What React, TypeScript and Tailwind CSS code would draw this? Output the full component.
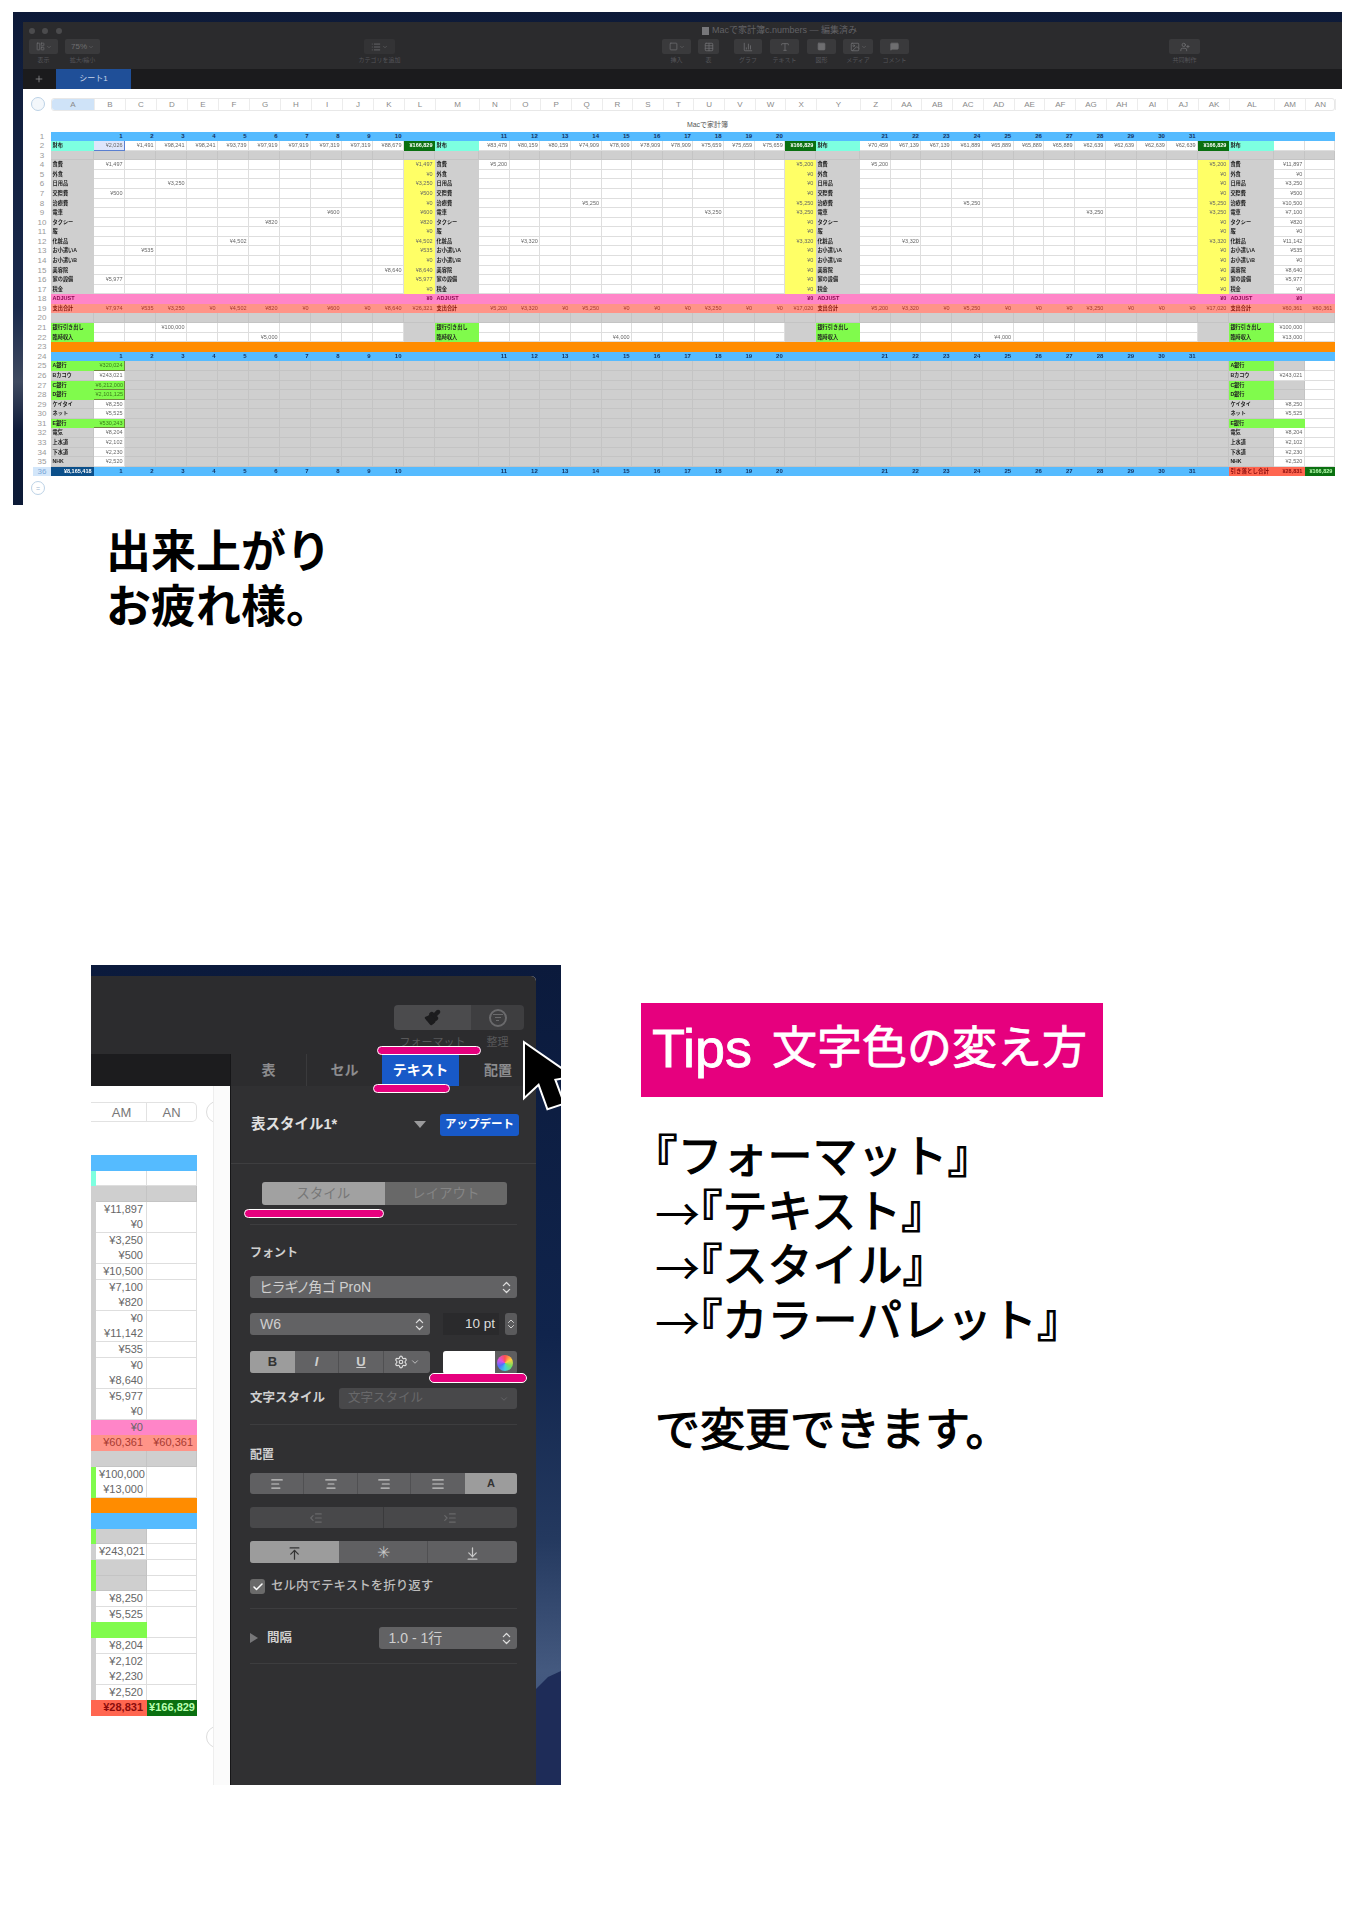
import type { ReactNode } from "react";
import {
  AlignCenter,
  AlignJustify,
  AlignLeft,
  AlignRight,
  ArrowDownToLine,
  ArrowUpToLine,
  BarChart3,
  Check,
  ChevronDown,
  ChevronsUpDown,
  Image,
  Indent,
  LayoutPanelLeft,
  List,
  MessageSquare,
  Outdent,
  Paintbrush,
  Plus,
  Settings,
  Square,
  Table,
  Type,
  UserPlus,
} from "lucide-react";

const COLS = [
  "A", "B", "C", "D", "E", "F", "G", "H", "I", "J", "K", "L", "M", "N", "O", "P", "Q", "R", "S", "T",
  "U", "V", "W", "X", "Y", "Z", "AA", "AB", "AC", "AD", "AE", "AF", "AG", "AH", "AI", "AJ", "AK", "AL", "AM", "AN",
];
const DAYS = [...COLS.slice(1, 11), ...COLS.slice(13, 23), ...COLS.slice(25, 36)];
const LABEL_COLS = ["A", "M", "Y", "AL"];
const TOTAL_COLS = ["L", "X", "AK"];
const ITEMS = ["食費", "外食", "日用品", "交際費", "治療費", "電車", "タクシー", "服", "化粧品", "お小遣いA", "お小遣いB", "美容院", "家の設備", "税金"];
const ACCOUNTS = ["A銀行", "Bカコウ", "C銀行", "D銀行", "ケイタイ", "ネット", "E銀行", "電気", "上水道", "下水道", "NHK"];
const BANK_ROWS = [25, 27, 28, 31];

function zip(cols: string[], vals: string[]) {
  return Object.fromEntries(cols.map((c, i) => [c, vals[i]]));
}

function itemRow(r: number): Record<string, string> {
  const i = r - 4;
  const l = ["¥1,497", "¥0", "¥3,250", "¥500", "¥0", "¥600", "¥820", "¥0", "¥4,502", "¥535", "¥0", "¥8,640", "¥5,977", "¥0"];
  const x = ["¥5,200", "¥0", "¥0", "¥0", "¥5,250", "¥3,250", "¥0", "¥0", "¥3,320", "¥0", "¥0", "¥0", "¥0", "¥0"];
  const am = ["¥11,897", "¥0", "¥3,250", "¥500", "¥10,500", "¥7,100", "¥820", "¥0", "¥11,142", "¥535", "¥0", "¥8,640", "¥5,977", "¥0"];
  return { A: ITEMS[i], M: ITEMS[i], Y: ITEMS[i], AL: ITEMS[i], L: l[i], X: x[i], AK: x[i], AM: am[i] };
}

const EXTRA: Record<number, Record<string, string>> = {
  4: { B: "¥1,497", N: "¥5,200", Z: "¥5,200" },
  6: { D: "¥3,250" },
  7: { B: "¥500" },
  8: { Q: "¥5,250", AC: "¥5,250" },
  9: { I: "¥600", U: "¥3,250", AG: "¥3,250" },
  10: { G: "¥820" },
  12: { F: "¥4,502", O: "¥3,320", AA: "¥3,320" },
  13: { C: "¥535" },
  15: { K: "¥8,640" },
  16: { B: "¥5,977" },
};

const PURSE = [
  "¥2,026", "¥1,491", "¥98,241", "¥98,241", "¥93,739", "¥97,919", "¥97,919", "¥97,319", "¥97,319", "¥88,679",
  "¥83,479", "¥80,159", "¥80,159", "¥74,909", "¥78,909", "¥78,909", "¥78,909", "¥75,659", "¥75,659", "¥75,659",
  "¥70,459", "¥67,139", "¥67,139", "¥61,889", "¥65,889", "¥65,889", "¥65,889", "¥62,639", "¥62,639", "¥62,639", "¥62,639",
];
const SPENT = [
  "¥7,974", "¥535", "¥3,250", "¥0", "¥4,502", "¥820", "¥0", "¥600", "¥0", "¥8,640",
  "¥5,200", "¥3,320", "¥0", "¥5,250", "¥0", "¥0", "¥0", "¥3,250", "¥0", "¥0",
  "¥5,200", "¥3,320", "¥0", "¥5,250", "¥0", "¥0", "¥0", "¥3,250", "¥0", "¥0", "¥0",
];
const NUMBERS = DAYS.map((_, i) => String(i + 1));
const ACCOUNT_B = ["¥320,024", "¥243,021", "¥6,212,000", "¥2,101,125", "¥8,250", "¥5,525", "¥530,243", "¥8,204", "¥2,102", "¥2,230", "¥2,520"];
const ACCOUNT_AM = ["", "¥243,021", "", "", "¥8,250", "¥5,525", "", "¥8,204", "¥2,102", "¥2,230", "¥2,520"];

function rowData(r: number): Record<string, string> {
  if (r === 1 || r === 24) return zip(DAYS, NUMBERS);
  if (r === 2) {
    return { ...zip(DAYS, PURSE), A: "財布", M: "財布", Y: "財布", AL: "財布", L: "¥166,829", X: "¥166,829", AK: "¥166,829" };
  }
  if (r >= 4 && r <= 17) return { ...itemRow(r), ...(EXTRA[r] ?? {}) };
  if (r === 18) return { A: "ADJUST", M: "ADJUST", Y: "ADJUST", AL: "ADJUST", L: "¥0", X: "¥0", AK: "¥0", AM: "¥0" };
  if (r === 19) {
    return {
      ...zip(DAYS, SPENT),
      A: "支出合計", M: "支出合計", Y: "支出合計", AL: "支出合計",
      L: "¥26,321", X: "¥17,020", AK: "¥17,020", AM: "¥60,361", AN: "¥60,361",
    };
  }
  if (r === 21) return { A: "銀行引き出し", M: "銀行引き出し", Y: "銀行引き出し", AL: "銀行引き出し", D: "¥100,000", AM: "¥100,000" };
  if (r === 22) return { A: "臨時収入", M: "臨時収入", Y: "臨時収入", AL: "臨時収入", G: "¥5,000", R: "¥4,000", AD: "¥4,000", AM: "¥13,000" };
  if (r >= 25 && r <= 35) {
    const i = r - 25;
    return { A: ACCOUNTS[i], AL: ACCOUNTS[i], B: ACCOUNT_B[i], AM: ACCOUNT_AM[i] };
  }
  if (r === 36) return { ...zip(DAYS, NUMBERS), A: "¥8,165,418", AL: "引き落とし合計", AM: "¥28,831", AN: "¥166,829" };
  return {};
}

function cellBg(r: number, col: string) {
  const label = LABEL_COLS.includes(col);
  const total = TOTAL_COLS.includes(col);
  if (r === 1 || r === 24) return "bg-[#55bbff] border-[#55bbff]";
  if (r === 36) {
    if (col === "A") return "bg-[#0b4f8a] border-[#0b4f8a]";
    if (col === "AL" || col === "AM") return "bg-[#ff6650] border-[#ff6650]";
    if (col === "AN") return "bg-[#0a7010] border-[#0a7010]";
    return "bg-[#55bbff] border-[#55bbff]";
  }
  if (r === 3 || r === 20) return "bg-[#cfcfcf] border-[#c4c4c4]";
  if (r === 23) return "bg-[#ff8c00] border-[#ff8c00]";
  if (r === 18) return "bg-[#ff85c8] border-[#ff85c8]";
  if (r === 19) return "bg-[#ff9488] border-[#ff9488]";
  if (r === 2) {
    if (col === "B") return "bg-[#dfe6fb] border-[#5a7fd0]";
    if (label) return "bg-[#7dffe0] border-[#7dffe0]";
    if (total) return "bg-[#0a7010] border-[#0a7010]";
    return "bg-white border-[#dedede]";
  }
  if (r === 21 || r === 22) {
    if (label) return "bg-[#80fb4c] border-[#80fb4c]";
    if (total) return "bg-[#cfcfcf] border-[#cfcfcf]";
    return "bg-white border-[#dedede]";
  }
  if (r >= 25) {
    const bank = BANK_ROWS.includes(r);
    if (col === "A" || col === "AL") return bank ? "bg-[#80fb4c] border-[#80fb4c]" : "bg-[#cfcfcf] border-[#c4c4c4]";
    if (col === "B") {
      if (bank) return "bg-[#80fb4c] border-[#6d8a3c]";
      return "bg-white border-[#dedede]";
    }
    if (col === "AM") {
      if (r === 31) return "bg-[#80fb4c] border-[#80fb4c]";
      return bank ? "bg-[#cfcfcf] border-[#c4c4c4]" : "bg-white border-[#dedede]";
    }
    if (col === "AN") return "bg-white border-[#dedede]";
    return "bg-[#cfcfcf] border-[#c4c4c4]";
  }
  if (label) return "bg-[#cfcfcf] border-[#cfcfcf]";
  if (total) return "bg-[#ffff66] border-[#ffff66]";
  return "bg-white border-[#dedede]";
}

function cellText(r: number, col: string) {
  if (r === 1 || r === 24 || (r === 36 && DAYS.includes(col))) return "text-[6px] text-[#12305e] font-bold";
  if (r === 36 && col === "A") return "text-white font-bold";
  if (r === 36 && col === "AN") return "text-[#b8ffb0] font-bold";
  if (r === 36) return "text-[#8a0c0c] font-bold";
  if (r === 18) return "text-[#8a0a50] font-bold";
  if (r === 2 && TOTAL_COLS.includes(col)) return "text-white font-bold";
  if (LABEL_COLS.includes(col)) return r === 19 ? "text-[5.2px] text-[#8a1a10] font-bold" : "text-[5.2px] text-[#222222] font-bold";
  if (r === 19) return "text-[#a83a30]";
  if (r >= 25 && col === "B" && BANK_ROWS.includes(r)) return "text-[#3a7a1a]";
  return "text-[#666666]";
}

const ROWS = Array.from({ length: 36 }, (_, i) => i + 1);

function Sheet() {
  return (
    <div className="grid auto-rows-[9.58px] w-[1284px] grid-cols-[43px_repeat(11,31px)_44px_repeat(11,30.64px)_44px_repeat(12,30.75px)_45px_31px_30px] text-[5.5px] leading-[9px] blur-[0.25px] [font-family:'Liberation_Sans','Noto_Sans_CJK_JP',sans-serif]">
      {ROWS.map((r) => {
        const data = rowData(r);
        return COLS.map((col) => (
          <div
            key={`${r}-${col}`}
            className={`overflow-hidden whitespace-nowrap border-r border-b px-[1.5px] ${cellBg(r, col)} ${cellText(r, col)} ${
              LABEL_COLS.includes(col) && !(r === 36 && col === "A") ? "text-left" : "text-right"
            }`}
          >
            {data[col]}
          </div>
        ));
      })}
    </div>
  );
}

function ToolBtn({ w, ml, label, children, dim }: { w: string; ml: string; label: string; children: ReactNode; dim?: boolean }) {
  return (
    <div className={`flex flex-col items-center ${w} ${ml}`}>
      <div className={`flex h-[15px] w-full items-center justify-center gap-px rounded-[2px] text-[#6e6e70] ${dim ? "bg-[#333335]" : "bg-[#3a3a3c]"}`}>
        {children}
      </div>
      <span className="mt-[2px] whitespace-nowrap text-[6px] leading-[9px] text-[#55555a]">{label}</span>
    </div>
  );
}

function MainWindow() {
  return (
    <section className="ml-[13px] mt-[12px] h-[493px] w-[1329px] bg-[linear-gradient(180deg,#0d1a38_0%,#1a2a4c_60%,#3f4a60_75%,#0f1c3a_85%,#0c1a36_100%)] pl-[10px] pt-[10px]">
      <div className="flex h-full flex-col bg-white">
        <div className="h-[47px] bg-[#2b2b2d]">
          <div className="flex h-[14px] items-center pl-[6px] pt-[3px]">
            <span className="h-[6px] w-[6px] rounded-full bg-[#4b4b4d]" />
            <span className="ml-[7px] h-[6px] w-[6px] rounded-full bg-[#4b4b4d]" />
            <span className="ml-[8px] h-[6px] w-[6px] rounded-full bg-[#4b4b4d]" />
            <span className="ml-[640px] h-[8px] w-[7px] bg-[#77777a]" />
            <span className="ml-[3px] text-[9px] text-[#626266]">Macで家計簿c.numbers — 編集済み</span>
          </div>
          <div className="mt-[3px] flex">
            <ToolBtn w="w-[29px]" ml="ml-[6px]" label="表示"><LayoutPanelLeft size={9} /><ChevronDown size={6} /></ToolBtn>
            <ToolBtn w="w-[35px]" ml="ml-[7px]" label="拡大/縮小"><span className="text-[8px]">75%</span><ChevronDown size={6} /></ToolBtn>
            <ToolBtn w="w-[31px]" ml="ml-[264px]" label="カテゴリを追加" dim><List size={10} /><ChevronDown size={6} /></ToolBtn>
            <ToolBtn w="w-[29px]" ml="ml-[267px]" label="挿入"><Square size={9} /><ChevronDown size={6} /></ToolBtn>
            <ToolBtn w="w-[21px]" ml="ml-[7px]" label="表"><Table size={10} /></ToolBtn>
            <ToolBtn w="w-[28px]" ml="ml-[15px]" label="グラフ"><BarChart3 size={10} /></ToolBtn>
            <ToolBtn w="w-[29px]" ml="ml-[8px]" label="テキスト"><Type size={10} /></ToolBtn>
            <ToolBtn w="w-[29px]" ml="ml-[8px]" label="図形"><Square size={9} fill="currentColor" /></ToolBtn>
            <ToolBtn w="w-[30px]" ml="ml-[7px]" label="メディア"><Image size={10} /><ChevronDown size={6} /></ToolBtn>
            <ToolBtn w="w-[29px]" ml="ml-[7px]" label="コメント"><MessageSquare size={9} fill="currentColor" /></ToolBtn>
            <ToolBtn w="w-[31px]" ml="ml-[260px]" label="共同制作"><UserPlus size={10} /></ToolBtn>
          </div>
        </div>
        <div className="flex h-[20px] bg-[#1b1b1d]">
          <Plus size={10} className="ml-[11px] self-center text-[#8a8a8c]" />
          <div className="ml-[12px] flex w-[75px] items-center justify-center bg-[#1f4f98] text-[8px] text-[#c9d6ea]">シート1</div>
        </div>
        <div className="pt-[9px]">
          <div className="flex h-[13px]">
            <span className="ml-[8px] mt-[-1px] h-[14px] w-[14px] rounded-full border border-[#bcd2e6] bg-[#f3f7fb]" />
            <div className="ml-[6px] grid w-[1284px] grid-cols-[43px_repeat(11,31px)_44px_repeat(11,30.64px)_44px_repeat(12,30.75px)_45px_31px_30px] rounded-[3px] border border-[#e8e8e8] text-center text-[8px] leading-[11px] text-[#8a8a8a]">
              {COLS.map((c) => (
                <span key={c} className={`border-r border-[#ececec] ${c === "A" ? "rounded-l-[3px] bg-[#cfe3f8]" : ""}`}>{c}</span>
              ))}
            </div>
          </div>
          <div className="h-[20.5px] pt-[9px] text-center text-[7px] leading-[9px] text-[#555555]">
            <span className="ml-[50px]">Macで家計簿</span>
          </div>
          <div className="flex">
            <div className="ml-[10px] w-[18px]">
              {ROWS.map((r) => (
                <div key={r} className={`h-[9.58px] text-center text-[8px] leading-[9.58px] ${r === 36 ? "bg-[#d2e6fa] text-[#7aa8d8]" : "text-[#999999]"}`}>{r}</div>
              ))}
            </div>
            <Sheet />
          </div>
          <span className="ml-[8px] mt-[5px] flex h-[14px] w-[14px] items-center justify-center rounded-full border border-[#bcd2e6] text-[7px] leading-none text-[#9ab5d0]">=</span>
        </div>
      </div>
    </section>
  );
}

function MiniTable() {
  return (
    <div className="mt-[33px] w-[106px] text-right text-[11px] text-[#666666] [font-family:'Liberation_Sans','Noto_Sans_CJK_JP',sans-serif]">
      {ROWS.map((r) => {
        const data = rowData(r);
        const bar = cellBg(r, "AL").split(" ")[0];
        return (
          <div key={r} className="grid h-[15.58px] grid-cols-[5px_51px_50px]">
            <div className={bar} />
            <div className={`border-b border-r px-[3px] leading-[15px] whitespace-nowrap ${cellBg(r, "AM")} ${r === 36 ? "text-[#8a0c0c] font-bold" : r === 19 ? "text-[#a83a30]" : ""}`}>
              {r === 1 || r === 24 ? "" : data.AM}
            </div>
            <div className={`overflow-hidden border-b border-r px-[1px] leading-[15px] whitespace-nowrap ${cellBg(r, "AN")} ${r === 36 ? "text-[#b8ffb0] font-bold" : r === 19 ? "pr-[3px] text-[#a83a30]" : ""}`}>
              {data.AN}
            </div>
          </div>
        );
      })}
    </div>
  );
}

function PanelSelect({ children, className }: { children: ReactNode; className: string }) {
  return (
    <div className={`flex h-[22px] items-center justify-between rounded-[3px] bg-[#626264] pl-[10px] pr-[3px] text-[14px] text-[#cfcfcf] [font-feature-settings:'palt'] ${className}`}>
      <span>{children}</span>
      <ChevronsUpDown size={15} className="text-[#dddddd]" />
    </div>
  );
}

function Divider({ className }: { className: string }) {
  return <div className={`h-px bg-[#3d3d3f] ${className}`} />;
}

function Inspector() {
  return (
    <aside className="h-full w-[306px] border-l border-[#161618] bg-[#303032] text-[#cfcfcf]">
      <div className="grid h-[32px] grid-cols-[76px_75px_77px_78px] bg-[#2c2c2e] text-center text-[14px] font-bold leading-[32px] text-[#8c8c8e]">
        <span className="border-r border-[#3a3a3c]">表</span>
        <span>セル</span>
        <span className="bg-[#1859c8] text-white">テキスト</span>
        <span>配置</span>
      </div>
      <div className="flex h-[78px] items-center border-b border-[#3e3e40] pl-[20px] pr-[17px]">
        <span className="text-[14.5px] font-bold text-[#e0e0e0]">表スタイル1*</span>
        <span className="ml-auto h-0 w-0 border-x-[6px] border-t-[7px] border-x-transparent border-t-[#9a9a9c]" />
        <span className="ml-[14px] flex h-[22px] w-[79px] items-center justify-center rounded-[3px] bg-[#1859c8] text-[11.5px] font-bold text-white">アップデート</span>
      </div>
      <div className="px-[19px]">
        <div className="ml-[12px] mt-[18px] grid h-[23px] w-[245px] grid-cols-2 overflow-hidden rounded-[3px] text-center text-[13.5px] leading-[23px]">
          <span className="bg-[#a1a1a1] text-[#777777]">スタイル</span>
          <span className="bg-[#686868] text-[#858585]">レイアウト</span>
        </div>
        <Divider className="mt-[19px]" />
        <p className="mt-[20px] h-[16px] text-[12px] font-bold leading-[16px]">フォント</p>
        <PanelSelect className="mt-[15px]">ヒラギノ角ゴ ProN</PanelSelect>
        <div className="mt-[15px] flex items-center">
          <PanelSelect className="w-[180px]">W6</PanelSelect>
          <span className="ml-[13px] flex h-[22px] w-[56px] items-center justify-end bg-[#2a2a2c] pr-[4px] text-[13.5px] text-[#dddddd]">10 pt</span>
          <span className="ml-[6px] flex h-[22px] w-[12px] items-center justify-center rounded-[3px] bg-[#5a5a5c]"><ChevronsUpDown size={12} /></span>
        </div>
        <div className="mt-[16px] flex h-[22px] items-center">
          <div className="grid h-full w-[180px] grid-cols-[45px_44px_45px_46px] overflow-hidden rounded-[3px] bg-[#626264] text-center text-[13px] font-bold leading-[22px]">
            <span className="bg-[#9c9c9c] text-[#333333]">B</span>
            <span className="border-r border-[#505052] italic">I</span>
            <span className="border-r border-[#505052] underline">U</span>
            <span className="flex items-center justify-center gap-[2px]"><Settings size={14} className="text-[#dddddd]" /><ChevronDown size={10} /></span>
          </div>
          <div className="ml-[13px] flex h-[23px] w-[74px] overflow-hidden rounded-[3px] bg-[#5e5e60]">
            <span className="w-[52px] bg-white" />
            <span className="ml-[2px] mt-[4px] h-[16px] w-[16px] rounded-full bg-[conic-gradient(#ff5050,#ffd040,#70e060,#40d0e0,#5070ff,#e050e0,#ff5050)]" />
          </div>
        </div>
        <div className="mt-[15px] flex h-[21px] items-center">
          <span className="w-[89px] text-[12.5px] font-bold">文字スタイル</span>
          <div className="flex h-full flex-1 items-center justify-between rounded-[3px] bg-[#48484a] pl-[9px] pr-[8px] text-[12.5px] text-[#68686a]">
            文字スタイル
            <ChevronDown size={10} />
          </div>
        </div>
        <Divider className="mt-[15px]" />
        <p className="mt-[22px] h-[16px] text-[12px] font-bold leading-[16px]">配置</p>
        <div className="mt-[10px] grid h-[21px] grid-cols-[54px_54px_53px_54px_1fr] overflow-hidden rounded-[3px] bg-[#606062] text-[#c8c8c8] *:flex *:items-center *:justify-center">
          <span className="border-r border-[#505052]"><AlignLeft size={14} /></span>
          <span className="border-r border-[#505052]"><AlignCenter size={14} /></span>
          <span className="border-r border-[#505052]"><AlignRight size={14} /></span>
          <span><AlignJustify size={14} /></span>
          <span className="bg-[#9c9c9c] text-[11px] font-bold text-[#333333]">A</span>
        </div>
        <div className="mt-[13px] grid h-[21px] grid-cols-2 overflow-hidden rounded-[3px] bg-[#48484a] text-[#68686a] *:flex *:items-center *:justify-center">
          <span className="border-r border-[#3a3a3c]"><Outdent size={14} /></span>
          <span><Indent size={14} /></span>
        </div>
        <div className="mt-[13px] grid h-[22px] grid-cols-[89px_89px_1fr] overflow-hidden rounded-[3px] bg-[#606062] text-[#c8c8c8] *:flex *:items-center *:justify-center">
          <span className="bg-[#9c9c9c] text-[#333333]"><ArrowUpToLine size={15} /></span>
          <span className="border-r border-[#505052] text-[16px]">✳</span>
          <span><ArrowDownToLine size={15} /></span>
        </div>
        <div className="mt-[16px] flex h-[15px] items-center">
          <span className="flex h-[15px] w-[15px] items-center justify-center rounded-[3px] bg-[#6a6a6a]"><Check size={12} strokeWidth={3} className="text-white" /></span>
          <span className="ml-[6px] text-[12.5px] font-medium text-[#bdbdbd]">セル内でテキストを折り返す</span>
        </div>
        <Divider className="mt-[14px]" />
        <div className="mt-[18px] flex h-[22px] items-center">
          <span className="h-0 w-0 border-y-[5px] border-l-[8px] border-y-transparent border-l-[#777779]" />
          <span className="ml-[9px] w-[112px] text-[12.5px] font-bold">間隔</span>
          <PanelSelect className="w-[139px]">1.0 - 1行</PanelSelect>
        </div>
        <Divider className="mt-[14px]" />
      </div>
    </aside>
  );
}

function FormatWindow() {
  return (
    <section className="relative ml-[91px] h-[820px] w-[470px] shrink-0 overflow-hidden bg-[linear-gradient(180deg,#0b1a3c_0%,#10244c_45%,#24395f_70%,#44597f_86%,#3c4f78_100%)] pt-[11px] [font-family:'Liberation_Sans','Noto_Sans_CJK_JP',sans-serif]">
      <svg className="absolute bottom-0 right-0 h-[114px] w-[25px]" viewBox="0 0 25 114" preserveAspectRatio="none">
        <polygon points="0,18 12,6 25,0 25,114 0,114" fill="#1e2c58" />
      </svg>
      <div className="relative flex h-[809px] w-[445px] flex-col overflow-hidden rounded-tr-[5px] bg-white">
        <div className="flex h-[78px] shrink-0 flex-col items-end bg-[#2c2c2e] pr-[12px] pt-[29px]">
          <div className="grid h-[25px] w-[130px] grid-cols-[77px_53px] overflow-hidden rounded-[4px]">
            <span className="flex items-center justify-center bg-[#4b4b4d] text-[#1c1c1e]"><Paintbrush size={17} fill="currentColor" /></span>
            <span className="flex items-center justify-center bg-[#3e3e40] text-[#6a6a6c]">
              <span className="flex h-[18px] w-[18px] flex-col items-center justify-center gap-[2px] rounded-full border-2 border-[#6a6a6c]">
                <span className="h-px w-[10px] bg-[#6a6a6c]" />
                <span className="h-px w-[6px] bg-[#6a6a6c]" />
                <span className="h-px w-[3px] bg-[#6a6a6c]" />
              </span>
            </span>
          </div>
          <div className="mt-[4px] grid w-[130px] grid-cols-[77px_53px] text-center text-[11px] text-[#58585a]">
            <span>フォーマット</span>
            <span>整理</span>
          </div>
        </div>
        <div className="flex min-h-0 flex-1">
          <div className="relative w-[139px] shrink-0 bg-white">
            <div className="h-[32px] bg-[#1c1c1e]" />
            <div className="mt-[16px] flex h-[20px] w-[106px] rounded-r-[5px] border border-l-0 border-[#e2e2e2] text-center text-[13px] leading-[19px] text-[#777777]">
              <span className="w-[56px] border-r border-[#e2e2e2] pl-[6px]">AM</span>
              <span className="flex-1">AN</span>
            </div>
            <MiniTable />
            <span className="absolute left-[115px] top-[47px] h-[22px] w-[22px] rounded-full border border-[#dddddd]" />
            <span className="absolute left-[115px] top-[672px] h-[22px] w-[22px] rounded-full border border-[#dddddd]" />
            <div className="absolute bottom-0 right-0 top-[32px] w-[17px] border-l border-[#eeeeee] bg-[#fbfbfb]" />
          </div>
          <Inspector />
        </div>
      </div>
      {/* magenta underlines drawn over the screenshot */}
      <span className="absolute left-[286px] top-[81px] h-[9px] w-[104px] rounded-full border border-white bg-[#e6007e]" />
      <span className="absolute left-[282px] top-[119px] h-[9px] w-[77px] rounded-full border border-white bg-[#e6007e]" />
      <span className="absolute left-[153px] top-[244px] h-[9px] w-[140px] rounded-full border border-white bg-[#e6007e]" />
      <span className="absolute left-[338px] top-[408px] h-[10px] w-[98px] rounded-full border border-white bg-[#e6007e]" />
      {/* pointer */}
      <svg className="absolute left-[428px] top-[68px] h-[90px] w-[60px]" viewBox="0 0 60 90">
        <path d="M6 11V63L20 50L29 75L44 70L35 46L52 43Z" fill="#000000" stroke="#ffffff" strokeWidth="4" paintOrder="stroke" />
      </svg>
    </section>
  );
}

function Step({ arrow, children }: { arrow?: boolean; children: string }) {
  return (
    <p className="flex whitespace-nowrap">
      {arrow && <span className="w-[45px] [-webkit-text-stroke:0] [font-family:'Noto_Sans_CJK_JP',sans-serif]">→</span>}
      <span className="[font-feature-settings:'halt']">『</span>
      <span>{children}</span>
      <span className="[font-feature-settings:'halt']">』</span>
    </p>
  );
}

function TipsColumn() {
  return (
    <div className="ml-[80px] mt-[38px] w-[462px] [font-family:'Liberation_Sans','Noto_Sans_CJK_JP',sans-serif]">
      <h2 className="flex h-[94px] items-center bg-[#e6007e] pb-[3px] pl-[11px] text-[45px] whitespace-nowrap text-white [-webkit-text-stroke:0.8px_white]">
        <span className="mr-[20px] text-[54px]">Tips</span>
        <span>文字色の変え方</span>
      </h2>
      <div className="ml-[14px] mt-[34px] text-[45px] leading-[54.5px] text-black [-webkit-text-stroke:1.2px_black]">
        <Step>フォーマット</Step>
        <Step arrow>テキスト</Step>
        <Step arrow>スタイル</Step>
        <Step arrow>カラーパレット</Step>
        <p className="mt-[54.5px] whitespace-nowrap">で変更できます。</p>
      </div>
    </div>
  );
}

export default function App() {
  return (
    <div className="h-[1920px] w-[1357px] overflow-hidden bg-white [font-family:'Liberation_Sans','Noto_Sans_CJK_JP',sans-serif]">
      <MainWindow />
      <div className="ml-[106px] mt-[20px] text-[45px] font-bold leading-[55px] text-black">
        <p>出来上がり</p>
        <p>お疲れ様。</p>
      </div>
      <div className="mt-[330px] flex">
        <FormatWindow />
        <TipsColumn />
      </div>
    </div>
  );
}
